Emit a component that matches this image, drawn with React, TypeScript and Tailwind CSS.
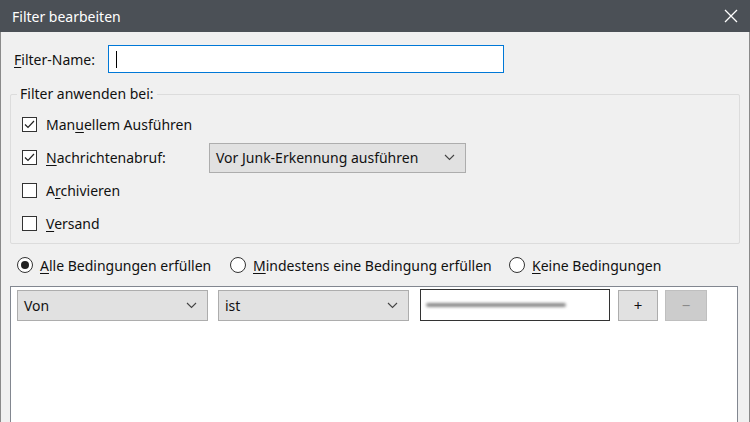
import React from 'react';

const font = { fontFamily: '"Noto Sans", "Open Sans", sans-serif' };

function U({ children }: { children: React.ReactNode }) {
  return <span className="underline underline-offset-2 decoration-1">{children}</span>;
}

function Check({ checked }: { checked?: boolean }) {
  return (
    <span className="flex h-[15px] w-[15px] items-center justify-center border border-[#333] bg-white">
      {checked ? (
        <svg width="11" height="9" viewBox="0 0 11 9" fill="none">
          <path d="M1 4.5 L4 7.5 L10 1" stroke="#222" strokeWidth="1.2" />
        </svg>
      ) : null}
    </span>
  );
}

function Radio({ checked }: { checked?: boolean }) {
  return (
    <span className="flex h-[16px] w-[16px] items-center justify-center rounded-full border border-[#333] bg-white">
      {checked ? <span className="h-[8px] w-[8px] rounded-full bg-[#222]" /> : null}
    </span>
  );
}

function Chevron() {
  return (
    <svg width="11" height="7" viewBox="0 0 11 7" fill="none">
      <path d="M1 1 L5.5 5.5 L10 1" stroke="#444" strokeWidth="1.1" />
    </svg>
  );
}

function Select({ label, className }: { label: string; className: string }) {
  return (
    <div className={`flex items-center justify-between border border-[#adadad] bg-[#e1e1e1] pl-[6px] pr-[10px] text-[14px] text-[#111] ${className}`}>
      <span>{label}</span>
      <Chevron />
    </div>
  );
}

export default function App() {
  return (
    <div className="h-[422px] w-[750px] overflow-hidden bg-[#f0f0f0] text-[#111]" style={font}>
      <div className="flex h-[32px] items-center justify-between bg-[#4b5056] pl-[12px] pr-[12px] text-[14px] text-white">
        <span>Filter bearbeiten</span>
        <svg width="14" height="14" viewBox="0 0 14 14" fill="none">
          <path d="M1 1 L13 13 M13 1 L1 13" stroke="#fff" strokeWidth="1.3" />
        </svg>
      </div>
      <div className="h-[390px] border-x border-[#8a8a8a] pl-[9px] pr-[9px]">
        <div className="flex h-[54px] items-center gap-[13px] pl-[4px] text-[14px]">
          <span><U>F</U>ilter-Name:</span>
          <div className="flex h-[28px] w-[396px] items-center border border-[#0078d7] bg-white pl-[7px]">
            <span className="h-[17px] w-[1px] bg-black" />
          </div>
        </div>

        <div className="relative mt-[8px] h-[150px] w-[730px] rounded-[2px] border border-[#dcdcdc]">
          <span className="absolute left-[6px] top-[-12px] bg-[#f0f0f0] px-[3px] text-[14px]">Filter anwenden bei:</span>
          <div className="flex flex-col pl-[11px] pt-[13px] text-[14px]">
            <label className="flex h-[33px] items-center gap-[9px]">
              <Check checked />
              <span>Man<U>u</U>ellem Ausführen</span>
            </label>
            <div className="flex h-[33px] items-center">
              <label className="flex w-[187px] items-center gap-[9px]">
                <Check checked />
                <span><U>N</U>achrichtenabruf:</span>
              </label>
              <Select label="Vor Junk-Erkennung ausführen" className="h-[30px] w-[257px]" />
            </div>
            <label className="flex h-[33px] items-center gap-[9px]">
              <Check />
              <span>A<U>r</U>chivieren</span>
            </label>
            <label className="flex h-[33px] items-center gap-[9px]">
              <Check />
              <span><U>V</U>ersand</span>
            </label>
          </div>
        </div>

        <div className="flex h-[42px] items-center pl-[7px] text-[14px]">
          <label className="flex w-[213px] items-center gap-[7px]">
            <Radio checked />
            <span><U>A</U>lle Bedingungen erfüllen</span>
          </label>
          <label className="flex w-[279px] items-center gap-[7px]">
            <Radio />
            <span><U>M</U>indestens eine Bedingung erfüllen</span>
          </label>
          <label className="flex items-center gap-[7px]">
            <Radio />
            <span><U>K</U>eine Bedingungen</span>
          </label>
        </div>

        <div className="h-[200px] w-[728px] border border-[#828790] bg-white">
          <div className="flex items-center pl-[6px] pt-[2px]">
            <Select label="Von" className="h-[31px] w-[191px]" />
            <Select label="ist" className="ml-[10px] h-[31px] w-[191px]" />
            <div className="ml-[11px] flex h-[32px] w-[190px] items-center border border-[#333] bg-white pl-[5px]">
              <span className="h-[4px] w-[140px] rounded-full bg-[#8a8a8a] blur-[1.5px]" />
            </div>
            <button className="ml-[8px] flex h-[31px] w-[40px] items-center justify-center border border-[#adadad] bg-[#e1e1e1] text-[15px] text-[#111]">+</button>
            <button className="ml-[7px] flex h-[31px] w-[42px] items-center justify-center border border-[#bfbfbf] bg-[#cccccc] text-[15px] text-[#8a8a8a]">−</button>
          </div>
        </div>
      </div>
    </div>
  );
}
